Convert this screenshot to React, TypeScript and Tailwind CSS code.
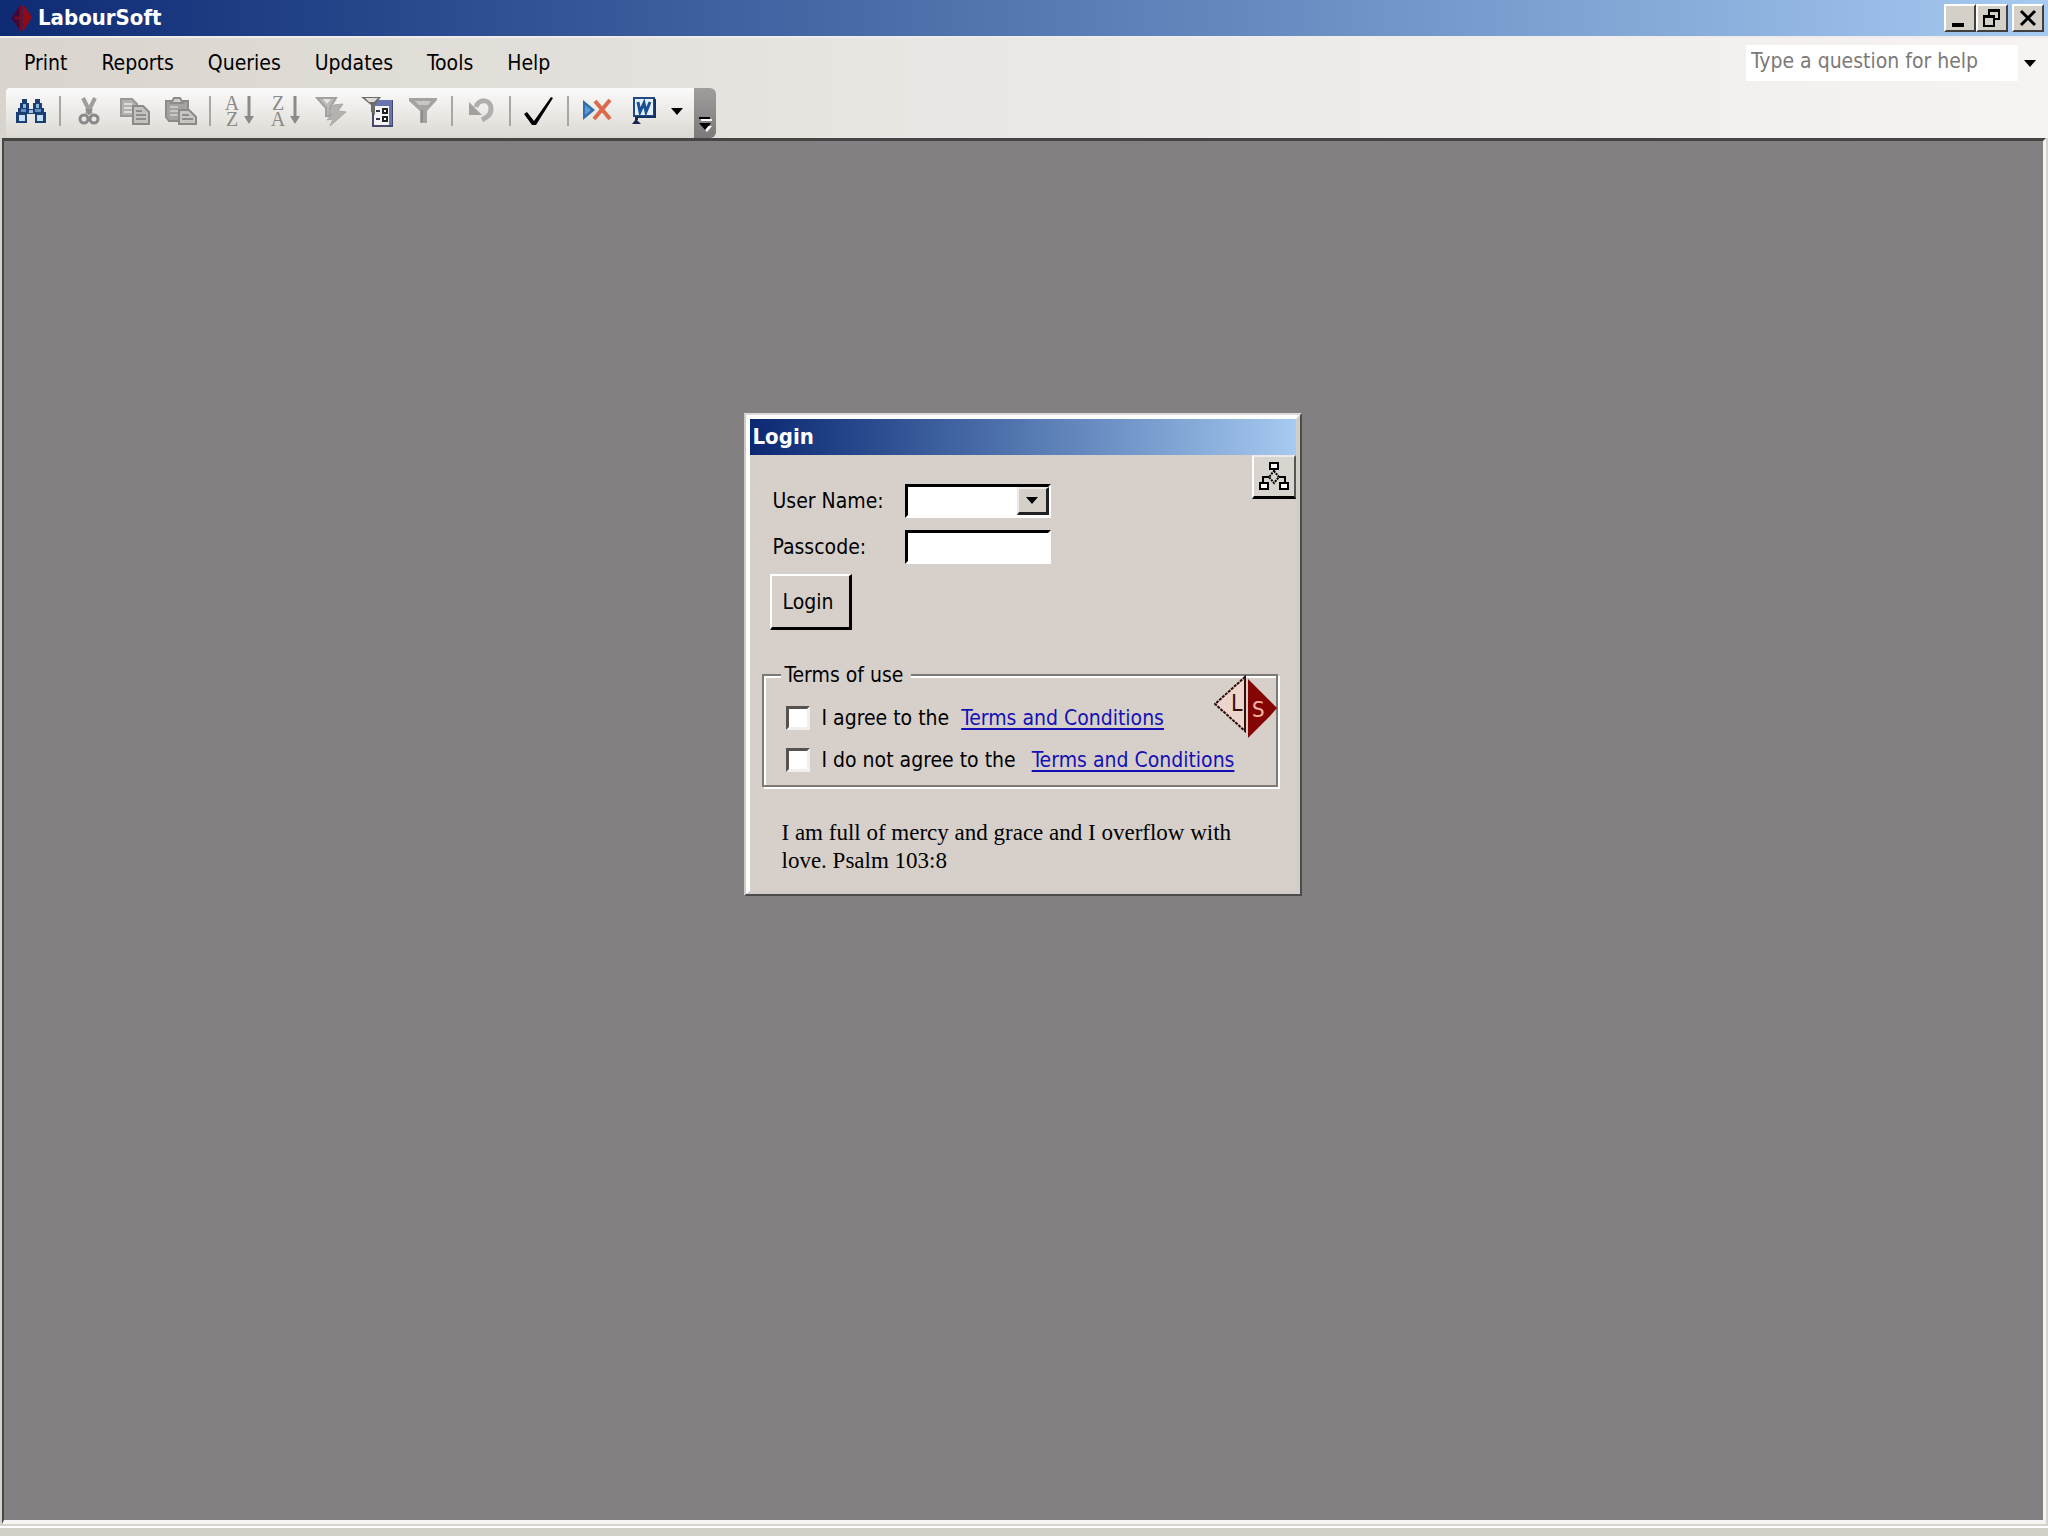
import type { ReactNode } from "react";

const UI_FONT = "font-['DejaVu_Sans_Condensed','DejaVu_Sans',sans-serif]";

const MENUS = ["Print", "Reports", "Queries", "Updates", "Tools", "Help"];

function Glyph({ w = 32, h = 32, children }: { w?: number; h?: number; children: ReactNode }) {
  return (
    <svg width={w} height={h} viewBox={`0 0 ${w} ${h}`} aria-hidden="true" className="block shrink-0">
      {children}
    </svg>
  );
}

function Diamond() {
  return (
    <Glyph w={24} h={32}>
      <path d="M11 2v28L1 16z" fill="#3d0a38" />
      <path d="M13 2l9 13-9 15z" fill="#8e0a14" />
      <path d="M11 4v25M5 16h7" stroke="#7a0a20" strokeWidth="3" />
    </Glyph>
  );
}

function Binoculars() {
  return (
    <Glyph>
      <path d="M7 4h5v4h2v6h4V8h2V4h5v4h2v5h2v4h2v11H20v-9h-8v9H1V17h2v-4h2V8h2z" fill="#1c3f73" />
      <path d="M8 9h3v4H8zM21 9h3v4h-3z" fill="#8fb6dc" />
      <path d="M6 14h5v3H6zM20 14h6v3h-6z" fill="#5f8fc4" />
      <path d="M4 20h6v6H4zM22 20h6v6h-6z" fill="#c4e0f4" />
      <path d="M14 15h4v3h-4z" fill="#9cc3e6" />
    </Glyph>
  );
}

function Scissors() {
  return (
    <Glyph>
      <path d="M10 3l8 16M22 3l-8 16" stroke="#a09d9b" strokeWidth="4" fill="none" />
      <path d="M12 14l4 6 4-6z" fill="#8f8c8a" />
      <circle cx="11" cy="24" r="4" stroke="#8a8888" strokeWidth="3" fill="none" />
      <circle cx="21" cy="24" r="4" stroke="#8a8888" strokeWidth="3" fill="none" />
    </Glyph>
  );
}

function Copy() {
  return (
    <Glyph>
      <path d="M2 4h11l5 5v12H2z" fill="#b4b1ae" stroke="#9a9896" strokeWidth="2" />
      <path d="M5 9h8M5 13h9M5 17h9" stroke="#dddad7" strokeWidth="2" />
      <path d="M14 11h10l6 6v12H14z" fill="#c4c1be" stroke="#8c8a88" strokeWidth="2" />
      <path d="M17 16h6M17 20h10M17 24h10" stroke="#8f8d8b" strokeWidth="2" />
    </Glyph>
  );
}

function Paste() {
  return (
    <Glyph>
      <path d="M1 6h22v20H4l-3-4z" fill="#a5a2a0" stroke="#8e8c8a" strokeWidth="2" />
      <path d="M6 8l3-5h6l3 5z" fill="#d0cdca" stroke="#8e8c8a" strokeWidth="2" />
      <path d="M5 12h8M5 16h8M5 20h8" stroke="#c9c6c3" strokeWidth="2" />
      <path d="M14 15h10l7 7v7H14z" fill="#c9c6c3" stroke="#8c8a88" strokeWidth="2" />
      <path d="M17 20h7M17 24h11" stroke="#8f8d8b" strokeWidth="2" />
    </Glyph>
  );
}

function Sort({ top, bottom }: { top: string; bottom: string }) {
  return (
    <span className="flex h-8 items-center gap-1 text-[#8c8988]">
      <span className="flex w-4 flex-col items-center font-['Liberation_Serif',serif] text-xl leading-4">
        <span>{top}</span>
        <span>{bottom}</span>
      </span>
      <Glyph w={10}>
        <path d="M5 1v24" stroke="#8c8988" strokeWidth="3" />
        <path d="M0 21h10l-5 8z" fill="#8c8988" />
      </Glyph>
    </span>
  );
}

function FilterSelection() {
  return (
    <Glyph>
      <path d="M2 3h19l-6 10v8h-4v-8z" fill="#bab7b4" stroke="#a3a09e" strokeWidth="2" />
      <path d="M8 4l4 5 4-5z" fill="#e6e3e0" />
      <path d="M19 10l9-1-5 7 8 1-16 14 3-7-6 1 5-6-4-1z" fill="#b4b1ae" stroke="#aba8a6" />
    </Glyph>
  );
}

function FilterForm() {
  return (
    <Glyph>
      <path d="M12 6h19v25H12z" fill="#f4f4f8" stroke="#46496a" strokeWidth="2" />
      <path d="M14 5h17v6H14zM28 10h3v20h-3z" fill="#6a74b0" />
      <path d="M0 2h20l-6 8v10l-4-3v-7z" fill="#6f6c6c" />
      <path d="M4 3h13l-4 4H8z" fill="#dedcda" />
      <path d="M15 16h4M15 24h4" stroke="#33364f" strokeWidth="2" />
      <path d="M22 14h4v4h-4zM22 22h4v4h-4z" fill="#fff" stroke="#222" strokeWidth="2" />
    </Glyph>
  );
}

function Filter() {
  return (
    <Glyph>
      <path d="M2 3h28v2L20 16v12h-7V16L2 6z" fill="#a5a29f" />
      <path d="M8 6h16l-3 4h-9z" fill="#c9c6c3" />
      <path d="M15 15v12" stroke="#8f8c8a" strokeWidth="2" />
    </Glyph>
  );
}

function Undo() {
  return (
    <Glyph>
      <path d="M11 12c3-9 15-8 15 2 0 6-4 8-9 11" stroke="#b0adab" strokeWidth="5" fill="none" />
      <path d="M4 7v13h13z" fill="#a3a09e" />
    </Glyph>
  );
}

function Check() {
  return (
    <Glyph>
      <path d="M1 19l3-2 7 9L28 2l2 1-17 27H9z" fill="#000" />
    </Glyph>
  );
}

function DeleteRecord() {
  return (
    <Glyph>
      <path d="M2 5l12 10L2 25z" fill="#2f6fb2" />
      <path d="M4 10l6 5-6 5z" fill="#5f9bd4" />
      <path d="M14 6l15 18M29 5L13 24" stroke="#dc6a4c" strokeWidth="4" />
    </Glyph>
  );
}

function WordDoc() {
  return (
    <Glyph>
      <path d="M7 3h20v18H7z" fill="#e6f0fa" stroke="#1f4a86" strokeWidth="2" />
      <path d="M28 4v18H8" stroke="#143463" strokeWidth="2" fill="none" />
      <path d="M11 7l2 10 4-9 2 9 4-10" stroke="#1d4f96" strokeWidth="3" fill="none" />
      <path d="M8 22h3v3H8zM5 29l4-5 5 5z" fill="#16284c" />
    </Glyph>
  );
}

function Caret() {
  return (
    <Glyph w={12} h={7}>
      <path d="M0 0h12L6 7z" fill="#000" />
    </Glyph>
  );
}

function Hierarchy() {
  return (
    <Glyph>
      <g fill="none" stroke="#000" strokeWidth="2">
        <path d="M16 9v3M5 21v-5h6M27 21v-5h-6" />
        <path d="M12 2h8v6h-8zM2 22h8v6H2zM22 22h8v6h-8z" fill="#fff" />
        <path d="M16 10l5 6-5 6-5-6z" fill="#d8d4ce" strokeDasharray="2 1" />
      </g>
    </Glyph>
  );
}

function LsLogo() {
  return (
    <svg width="64" height="64" viewBox="0 0 64 64" role="img" aria-label="LS" className="block">
      <path d="M31 2v54L1 29z" fill="#ecd5cd" stroke="#2e0a06" strokeWidth="2" strokeDasharray="3 1" />
      <path d="M31 1v55" stroke="#3e0a08" strokeWidth="2" />
      <path d="M34 4l29 29-7 8-22 22z" fill="#840404" />
      <text x="17" y="36" fontSize="23" fontFamily="DejaVu Sans Condensed, sans-serif" fill="#3c0a06">
        L
      </text>
      <text x="38" y="42" fontSize="22" fontFamily="DejaVu Sans Condensed, sans-serif" fill="#f6b8a8">
        S
      </text>
    </svg>
  );
}

function ToolButton({ label, children }: { label: string; children: ReactNode }) {
  return (
    <button type="button" aria-label={label} className="flex h-10 w-[46px] items-center justify-center">
      {children}
    </button>
  );
}

function Separator() {
  return (
    <div className="flex w-3 justify-center">
      <div className="h-[30px] w-[2px] bg-[#aaa6a2]" />
    </div>
  );
}

function CaptionButton({ label, children }: { label: string; children: ReactNode }) {
  return (
    <button
      type="button"
      aria-label={label}
      className="flex h-7 w-8 items-center justify-center border-2 border-t-white border-r-[#404040] border-b-[#404040] border-l-white bg-[#d4d0c8]"
    >
      {children}
    </button>
  );
}

function TitleBar() {
  return (
    <header className="flex h-9 items-center justify-between bg-linear-to-r from-[#0f2a74] to-[#a6caf0] pr-1 pl-[10px]">
      <div className="flex items-center gap-1">
        <Diamond />
        <h1 className="text-[22px] leading-9 font-bold text-white">LabourSoft</h1>
      </div>
      <div className="flex">
        <CaptionButton label="Minimize">
          <Glyph w={20} h={20}>
            <path d="M2 15h12v4H2z" />
          </Glyph>
        </CaptionButton>
        <CaptionButton label="Restore">
          <Glyph w={20} h={20}>
            <path d="M7 2h10v9h-4M7 7V2M2 8h10v10H2z" fill="none" stroke="#000" strokeWidth="2" />
            <path d="M6 1h12v3H6zM1 7h12v3H1z" />
          </Glyph>
        </CaptionButton>
        <div className="w-1" />
        <CaptionButton label="Close">
          <Glyph w={20} h={20}>
            <path d="M3 3l14 14M17 3L3 17" stroke="#000" strokeWidth="3" />
          </Glyph>
        </CaptionButton>
      </div>
    </header>
  );
}

function MenuBar() {
  return (
    <div className="flex h-[50px] items-center justify-between pr-[6px] pl-[7px]">
      <nav className="flex">
        {MENUS.map((m) => (
          <button key={m} type="button" className="px-[17px] text-[21px] leading-7">
            {m}
          </button>
        ))}
      </nav>
      <div className="flex h-9 w-[296px] items-center bg-white">
        <input
          type="text"
          aria-label="Type a question for help"
          placeholder="Type a question for help"
          className="min-w-0 flex-1 pb-1 pl-[5px] text-[21px] leading-7 outline-none placeholder:text-[#7c7a78]"
        />
        <button
          type="button"
          aria-label="Recent questions"
          className="flex h-9 w-6 items-center justify-center bg-[#f6f4f3]"
        >
          <Caret />
        </button>
      </div>
    </div>
  );
}

function Toolbar() {
  return (
    <div className="flex h-[50px] pl-[6px]">
      <div className="flex items-center rounded-l-sm bg-linear-to-b from-[#fbfafa] to-[#dcd9d3] pr-[6px] pb-1 pl-[2px]">
        <ToolButton label="Find"><Binoculars /></ToolButton>
        <Separator />
        <ToolButton label="Cut"><Scissors /></ToolButton>
        <ToolButton label="Copy"><Copy /></ToolButton>
        <ToolButton label="Paste"><Paste /></ToolButton>
        <Separator />
        <ToolButton label="Sort ascending"><Sort top="A" bottom="Z" /></ToolButton>
        <ToolButton label="Sort descending"><Sort top="Z" bottom="A" /></ToolButton>
        <ToolButton label="Filter by selection"><FilterSelection /></ToolButton>
        <ToolButton label="Filter by form"><FilterForm /></ToolButton>
        <ToolButton label="Apply filter"><Filter /></ToolButton>
        <Separator />
        <ToolButton label="Undo"><Undo /></ToolButton>
        <Separator />
        <ToolButton label="Spelling"><Check /></ToolButton>
        <Separator />
        <ToolButton label="Delete record"><DeleteRecord /></ToolButton>
        <ToolButton label="Publish to Word"><WordDoc /></ToolButton>
        <button type="button" aria-label="Office links" className="flex h-10 w-[22px] items-center justify-center">
          <Caret />
        </button>
      </div>
      <button
        type="button"
        aria-label="Toolbar options"
        className="flex w-[22px] items-end justify-center rounded-r-md bg-linear-to-b from-[#a09d9d] to-[#7c7a7a] pb-[6px]"
      >
        <Glyph w={14} h={16}>
          <path d="M3 4h11" stroke="#fff" strokeWidth="2" />
          <path d="M4 10h10l-5 6z" fill="#fff" />
          <path d="M1 2h11" stroke="#000" strokeWidth="2" />
          <path d="M1 7h12l-6 7z" />
        </Glyph>
      </button>
    </div>
  );
}

function TermsRow({ id, text, gap }: { id: string; text: string; gap: string }) {
  return (
    <div className="flex h-[42px] items-center">
      <input
        id={id}
        type="checkbox"
        className="size-6 shrink-0 appearance-none border-3 border-t-[#555250] border-r-[#f2f0ee] border-b-[#f2f0ee] border-l-[#555250] bg-white"
      />
      <label htmlFor={id} className={`pl-3 ${gap}`}>
        {text}
      </label>
      <a href="#terms" className="text-[#1410b4] underline decoration-2 underline-offset-3">
        Terms and Conditions
      </a>
    </div>
  );
}

function LoginDialog() {
  return (
    <section
      role="dialog"
      aria-labelledby="login-title"
      className="w-[558px] border-2 border-t-[#dedad8] border-r-[#4c4a4a] border-b-[#4c4a4a] border-l-[#cfcbc9] bg-[#d7d0ca]"
    >
      <div className="border-t-4 border-r-4 border-b-3 border-l-4 border-t-white border-r-[#d0cdc8] border-b-[#d0cdc8] border-l-white">
        <h2
          id="login-title"
          className="bg-linear-to-r from-[#0c2872] to-[#a6caf0] pl-[3px] text-[22px] leading-9 font-bold text-white"
        >
          Login
        </h2>
        <form className="relative px-3 pt-[29px] pb-4 text-[21px] leading-7" onSubmit={(e) => e.preventDefault()}>
          <button
            type="button"
            aria-label="Switchboard"
            className="absolute top-0 right-0 flex h-11 w-11 items-center justify-center border-t-2 border-r-2 border-b-3 border-l-2 border-t-[#eceae6] border-r-[#555] border-b-black border-l-white bg-[#d8d4ce]"
          >
            <Hierarchy />
          </button>
          <div className="grid grid-cols-[132px_146px] items-center gap-y-3 pl-[11px]">
            <label htmlFor="user">User Name:</label>
            <div className="relative">
              <select
                id="user"
                className="block h-[34px] w-full appearance-none border-3 border-t-black border-r-white border-b-white border-l-black bg-white"
              />
              <span className="pointer-events-none absolute top-[3px] right-[2px] flex h-7 w-8 items-center justify-center border-t-2 border-r-3 border-b-3 border-l-2 border-t-[#eceae6] border-r-[#222] border-b-[#222] border-l-[#eceae6] bg-[#d4d0c8]">
                <Caret />
              </span>
            </div>
            <label htmlFor="pass">Passcode:</label>
            <input
              id="pass"
              type="password"
              className="h-[34px] w-full border-3 border-t-black border-r-white border-b-white border-l-black bg-white px-1 outline-none"
            />
          </div>
          <button
            type="submit"
            className="mt-[10px] ml-2 block h-14 w-[82px] border-t-2 border-r-3 border-b-3 border-l-2 border-t-white border-r-black border-b-black border-l-white pr-1"
          >
            Login
          </button>
          <fieldset className="relative mt-[31px] mr-[6px] border-2 border-[#7d7a76] px-[22px] pt-2 pb-1 shadow-[2px_2px_0_#fff,inset_2px_2px_0_#fff]">
            <legend className="ml-[-5px] bg-[#d7d0ca] px-1 pr-2">Terms of use</legend>
            <TermsRow id="agree" text="I agree to the" gap="pr-3" />
            <TermsRow id="disagree" text="I do not agree to the" gap="pr-4" />
            <div className="absolute top-[-14px] right-[-2px]">
              <LsLogo />
            </div>
          </fieldset>
          <p className="mt-8 px-5 font-['Liberation_Serif',serif] text-[23px] leading-7">
            I am full of mercy and grace and I overflow with love. Psalm 103:8
          </p>
        </form>
      </div>
    </section>
  );
}

export default function App() {
  return (
    <div className={`flex min-h-screen flex-col bg-[#d6d3cb] text-black ${UI_FONT}`}>
      <TitleBar />
      <div className="border-t-2 border-[#eeecec] bg-linear-to-r from-[#d9d4cd] via-[#e9e7e3] via-45% to-[#f6f3f2]">
        <MenuBar />
        <Toolbar />
      </div>
      <main className="mr-[2px] ml-[2px] flex flex-1 justify-center border-t-3 border-r-3 border-b-4 border-l-2 border-t-[#464444] border-r-[#f4f2f2] border-b-[#f6f4f4] border-l-[#464444] bg-[#828080] pt-[272px] pr-[2px]">
        <div>
          <LoginDialog />
        </div>
      </main>
      <footer className="mt-[2px] h-[10px] border-t-2 border-white bg-[#d3d0c8]" />
    </div>
  );
}
